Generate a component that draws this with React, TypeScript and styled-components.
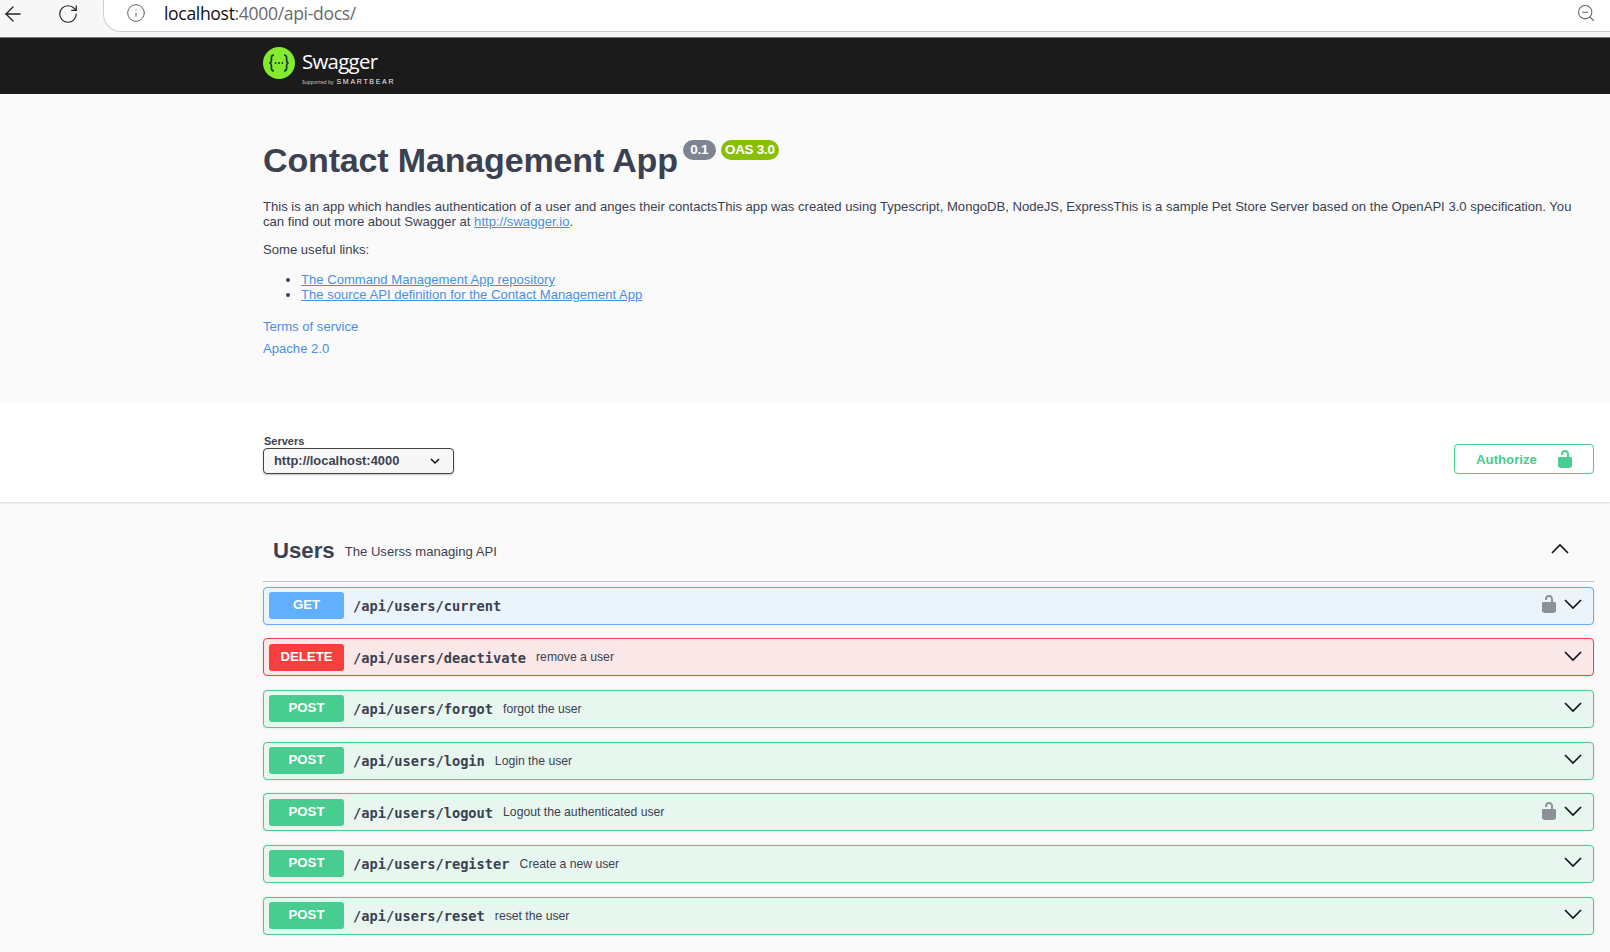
import React from 'react';
import styled, { createGlobalStyle } from 'styled-components';
import { ArrowLeft, Info, RotateCw, ZoomOut } from 'lucide-react';

const GlobalStyle = createGlobalStyle`
  html, body {
    margin: 0;
    padding: 0;
    background: #fafafa;
    overflow: hidden;
    font-family: 'Liberation Sans', Arial, sans-serif;
    color: #3b4151;
  }
`;

const BrowserBar = styled.div`
  height: 38px;
  background: #f7f7f7;
  border-bottom: 1px solid #777;
  box-sizing: border-box;
  display: flex;
  align-items: flex-start;
  color: #222;
`;

const NavButton = styled.div<{ $width: number; $inset?: number }>`
  width: ${(p) => p.$width}px;
  height: 27px;
  box-sizing: border-box;
  padding-left: ${(p) => p.$inset ?? 0}px;
  display: flex;
  align-items: center;
  justify-content: center;
  flex: none;
`;

const UrlPill = styled.div`
  flex: 1;
  height: 32px;
  margin-left: 5px;
  background: #fff;
  border-bottom: 1px solid #cfcfcf;
  border-left: 1px solid #cfcfcf;
  border-bottom-left-radius: 18px;
  display: flex;
  align-items: center;
  padding: 0 14px 5px 22px;
  box-sizing: border-box;
  color: #666;
`;

const UrlText = styled.div`
  margin-left: 18px;
  font: 400 17.6px 'Open Sans', sans-serif;
  letter-spacing: -0.35px;
  flex: 1;
  color: #6a6a6a;
  b {
    font-weight: 400;
    color: #111;
  }
`;

const Topbar = styled.div`
  height: 56px;
  box-sizing: border-box;
  background: #1b1b1b;
  padding: 9px 0 0 263px;
  display: flex;
  align-items: flex-start;
`;

const LogoText = styled.div`
  margin-left: 7px;
  color: #fff;
  display: flex;
  flex-direction: column;
  margin-top: 2px;
`;

const LogoName = styled.div`
  font: 400 20.4px/24px 'Open Sans', sans-serif;
  letter-spacing: -0.7px;
  small {
    font-size: 5px;
    letter-spacing: 0;
    color: #999;
  }
`;

const LogoSupport = styled.div`
  font: 400 5px/8px 'Open Sans', sans-serif;
  color: #cfcfcf;
  display: flex;
  align-items: center;
  gap: 3px;
  margin-top: -1px;
  b {
    font: 400 7px/8px 'Liberation Sans', sans-serif;
    letter-spacing: 1.7px;
    color: #f0f0f0;
  }
`;

const InfoSection = styled.section`
  height: 309px;
  box-sizing: border-box;
  padding: 44px 16px 0 263px;
  font-size: 13.1px;
  line-height: 15px;
`;

const TitleRow = styled.div`
  display: flex;
  align-items: flex-start;
  height: 61px;
`;

const Title = styled.h1`
  margin: 0;
  font-size: 34px;
  line-height: 44px;
  font-weight: 700;
  letter-spacing: -0.15px;
`;

const Badge = styled.span<{ $bg: string; $width: number }>`
  width: ${(p) => p.$width}px;
  height: 20px;
  margin: 2px 0 0 5px;
  border-radius: 10px;
  background: ${(p) => p.$bg};
  color: #fff;
  font-size: 13.5px;
  font-weight: 700;
  letter-spacing: -0.3px;
  line-height: 20px;
  text-align: center;
`;

const Para = styled.p`
  margin: 0 0 13px;
`;

const Link = styled.a`
  color: #4990e2;
  text-decoration: underline;
`;

const LinkList = styled.ul`
  margin: 15px 0 17px;
  padding-left: 38px;
`;

const PlainLink = styled.a`
  display: block;
  color: #4990e2;
  text-decoration: none;
  line-height: 16px;
  margin-bottom: 6px;
`;

const SchemeBar = styled.section`
  height: 99px;
  box-sizing: border-box;
  background: #fff;
  box-shadow: 0 1px 2px 0 rgba(0, 0, 0, 0.15);
  padding: 32px 16px 0 263px;
  display: flex;
  align-items: flex-start;
  justify-content: space-between;
`;

const ServerGroup = styled.div`
  display: flex;
  flex-direction: column;
`;

const ServerLabel = styled.label`
  font-size: 11px;
  line-height: 13px;
  font-weight: 700;
  padding-left: 1px;
`;

const ServerSelect = styled.div`
  width: 191px;
  height: 26px;
  box-sizing: border-box;
  border: 1px solid #41444e;
  border-radius: 4px;
  background: #f7f7f7;
  box-shadow: 0 1px 2px 0 rgba(0, 0, 0, 0.25);
  padding: 0 13px 1px 10px;
  display: flex;
  align-items: center;
  justify-content: space-between;
  font-size: 12.9px;
  font-weight: 700;
`;

const AuthorizeButton = styled.button`
  width: 140px;
  height: 30px;
  margin-top: 9px;
  border: 1px solid #49cc90;
  border-radius: 4px;
  background: transparent;
  color: #49cc90;
  font: 700 13.2px 'Liberation Sans', sans-serif;
  padding: 0 0 0 3px;
  display: flex;
  align-items: center;
  justify-content: center;
  gap: 18px;
  svg {
    fill: #49cc90;
  }
`;

const Operations = styled.main`
  padding: 0 16px 0 263px;
`;

const TagHeader = styled.div`
  height: 80px;
  box-sizing: border-box;
  margin-bottom: 4.6px;
  padding: 34px 24px 0 10px;
  border-bottom: 1px solid #bfbfbf;
  display: flex;
  align-items: flex-start;
`;

const TagName = styled.h3`
  margin: 0;
  font-size: 22.2px;
  line-height: 30px;
  font-weight: 700;
`;

const TagDescription = styled.span`
  margin-left: 10px;
  font-size: 13.1px;
  line-height: 32px;
  flex: 1;
`;

const TagToggle = styled.span`
  display: flex;
  margin-top: 3px;
`;

const Row = styled.div<{ $border: string; $bg: string }>`
  height: 38px;
  box-sizing: border-box;
  margin-bottom: 13.67px;
  padding: 0 10px 0 5px;
  border: 1px solid ${(p) => p.$border};
  border-radius: 4px;
  background: ${(p) => p.$bg};
  box-shadow: 0 0 3px rgba(0, 0, 0, 0.1);
  display: flex;
  align-items: center;
`;

const Method = styled.span<{ $bg: string }>`
  width: 75px;
  height: 27px;
  flex: none;
  border-radius: 3px;
  background: ${(p) => p.$bg};
  color: #fff;
  font-size: 13.2px;
  font-weight: 700;
  line-height: 26px;
  text-align: center;
`;

const Path = styled.span`
  margin-left: 9px;
  font: 700 13.7px 'DejaVu Sans Mono', monospace;
  padding-top: 1px;
`;

const Summary = styled.span`
  margin-left: 10px;
  font-size: 12.2px;
  flex: 1;
`;

const RowLock = styled.svg`
  fill: #8d9095;
  margin: 0 4px 3px 0;
`;

const RowToggle = styled.span`
  display: flex;
  margin-bottom: 3px;
`;

const LockIcon = ({ as: Comp = 'svg', size = 20 }: { as?: any; size?: number }) => (
  <Comp width={size} height={size} viewBox="0 0 20 20">
    <path d="M15.8 8H14V5.6C14 2.703 12.665 1 10 1 7.334 1 6 2.703 6 5.6V6h2v-.801C8 3.754 8.797 3 10 3c1.203 0 2 .754 2 2.199V8H4c-.553 0-1 .646-1 1.199V17c0 .549.428 1.139.951 1.307l1.197.387C5.672 18.861 6.55 19 7.1 19h5.8c.549 0 1.428-.139 1.951-.307l1.196-.387c.524-.167.953-.757.953-1.306V9.199C17 8.646 16.352 8 15.8 8z" />
  </Comp>
);

const Chevron = ({ up, size = 20, width = 1.6 }: { up?: boolean; size?: number; width?: number }) => (
  <svg width={size} height={size} viewBox="0 0 20 20" fill="none" stroke="#111" strokeWidth={width}>
    <polyline points={up ? '2,14 10,6 18,14' : '2,6 10,14 18,6'} />
  </svg>
);

const SwaggerMark = () => (
  <svg width="32" height="32" viewBox="0 0 32 32">
    <circle cx="16" cy="16" r="16" fill="#85ea2d" />
    <g fill="none" stroke="#173647" strokeWidth="1.7">
      <path d="M11 8c-2.2 0-2.6 1-2.6 3v2.5c0 1.4-.7 2.2-1.9 2.5 1.2.3 1.9 1.1 1.9 2.5V21c0 2 .4 3 2.6 3" />
      <path d="M21 8c2.2 0 2.6 1 2.6 3v2.5c0 1.4.7 2.2 1.9 2.5-1.2.3-1.9 1.1-1.9 2.5V21c0 2-.4 3-2.6 3" />
    </g>
    <g fill="#173647">
      <circle cx="12.6" cy="16" r="1" />
      <circle cx="16" cy="16" r="1" />
      <circle cx="19.4" cy="16" r="1" />
    </g>
  </svg>
);

const METHODS = {
  GET: { color: '#61affe', bg: '#ebf3fb' },
  DELETE: { color: '#f93e3e', bg: '#fae7e7' },
  POST: { color: '#49cc90', bg: '#e7f6ef' },
};

type Op = { method: keyof typeof METHODS; path: string; summary?: string; locked?: boolean };

const OPERATIONS: Op[] = [
  { method: 'GET', path: '/api/users/current', locked: true },
  { method: 'DELETE', path: '/api/users/deactivate', summary: 'remove a user' },
  { method: 'POST', path: '/api/users/forgot', summary: 'forgot the user' },
  { method: 'POST', path: '/api/users/login', summary: 'Login the user' },
  { method: 'POST', path: '/api/users/logout', summary: 'Logout the authenticated user', locked: true },
  { method: 'POST', path: '/api/users/register', summary: 'Create a new user' },
  { method: 'POST', path: '/api/users/reset', summary: 'reset the user' },
];

export default function App() {
  return (
    <>
      <GlobalStyle />
      <BrowserBar>
        <NavButton $width={26}>
          <ArrowLeft size={24} strokeWidth={1.3} />
        </NavButton>
        <NavButton $width={72} $inset={11}>
          <RotateCw size={22} strokeWidth={1.3} />
        </NavButton>
        <UrlPill>
          <Info size={20} strokeWidth={1.2} />
          <UrlText>
            <b>localhost</b>:4000/api-docs/
          </UrlText>
          <ZoomOut size={20} strokeWidth={1.3} />
        </UrlPill>
      </BrowserBar>
      <Topbar>
        <SwaggerMark />
        <LogoText>
          <LogoName>
            Swagger<small>.</small>
          </LogoName>
          <LogoSupport>
            Supported by <b>SMARTBEAR</b>
          </LogoSupport>
        </LogoText>
      </Topbar>
      <InfoSection>
        <TitleRow>
          <Title>Contact Management App</Title>
          <Badge $bg="#7d8492" $width={33}>0.1</Badge>
          <Badge $bg="#89bf04" $width={58}>OAS 3.0</Badge>
        </TitleRow>
        <Para>
          This is an app which handles authentication of a user and anges their contactsThis app was created using
          Typescript, MongoDB, NodeJS, ExpressThis is a sample Pet Store Server based on the OpenAPI 3.0 specification.
          You can find out more about Swagger at <Link href="#">http://swagger.io</Link>.
        </Para>
        <Para>Some useful links:</Para>
        <LinkList>
          <li><Link href="#">The Command Management App repository</Link></li>
          <li><Link href="#">The source API definition for the Contact Management App</Link></li>
        </LinkList>
        <PlainLink href="#">Terms of service</PlainLink>
        <PlainLink href="#">Apache 2.0</PlainLink>
      </InfoSection>
      <SchemeBar>
        <ServerGroup>
          <ServerLabel>Servers</ServerLabel>
          <ServerSelect>
            http://localhost:4000
            <Chevron size={10} width={3} />
          </ServerSelect>
        </ServerGroup>
        <AuthorizeButton>
          Authorize
          <LockIcon />
        </AuthorizeButton>
      </SchemeBar>
      <Operations>
        <TagHeader>
          <TagName>Users</TagName>
          <TagDescription>The Userss managing API</TagDescription>
          <TagToggle>
            <Chevron up />
          </TagToggle>
        </TagHeader>
        {OPERATIONS.map((op) => (
          <Row key={op.path} $border={METHODS[op.method].color} $bg={METHODS[op.method].bg}>
            <Method $bg={METHODS[op.method].color}>{op.method}</Method>
            <Path>{op.path}</Path>
            <Summary>{op.summary}</Summary>
            {op.locked && <LockIcon as={RowLock} />}
            <RowToggle>
              <Chevron />
            </RowToggle>
          </Row>
        ))}
      </Operations>
    </>
  );
}
